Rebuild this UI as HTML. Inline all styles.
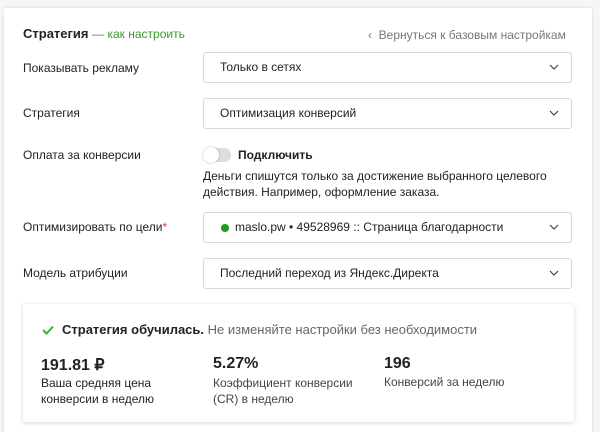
<!DOCTYPE html><html><head><meta charset="utf-8"><style>
html,body{margin:0;width:600px;height:432px;overflow:hidden}
body{background:#f6f6f6;font-family:"Liberation Sans",sans-serif;color:#222;position:relative}
.card{position:absolute;left:4px;top:8px;width:588px;height:430px;background:#fff;box-shadow:0 0 3px rgba(0,0,0,.12)}
.a{position:absolute;white-space:nowrap;font-size:12px}
.sel{position:absolute;left:203px;width:369px;height:31px;border:1px solid #d9d9d9;border-radius:3px;box-sizing:border-box;font-size:12px;line-height:29px;padding-left:16px}
.sel svg{position:absolute;right:12px;top:11px}
.inner{position:absolute;left:23px;top:304px;width:551px;height:118px;background:#fff;box-shadow:0 1px 4px rgba(0,0,0,.18);border-radius:3px}
</style></head><body>
<div class="card"></div>
<div class="a" style="left:23px;top:26px;font-size:13px"><b>Стратегия</b> <span style="color:#3c9a2e;font-size:12px">— как настроить</span></div>
<div class="a" style="left:368px;top:28px;color:#777">‹&nbsp;&nbsp;Вернуться к базовым настройкам</div>
<div class="a" style="left:23px;top:61px">Показывать рекламу</div>
<div class="sel" style="top:52px">Только в сетях<svg width="10" height="6"><path d="M1 1l4 4 4-4" fill="none" stroke="#444" stroke-width="1.2"/></svg></div>
<div class="a" style="left:23px;top:106px">Стратегия</div>
<div class="sel" style="top:98px">Оптимизация конверсий<svg width="10" height="6"><path d="M1 1l4 4 4-4" fill="none" stroke="#444" stroke-width="1.2"/></svg></div>
<div class="a" style="left:23px;top:148px">Оплата за конверсии</div>
<div style="position:absolute;left:203px;top:148px;width:28px;height:14px;border-radius:7px;background:#ddd"></div>
<div style="position:absolute;left:203px;top:147px;width:16px;height:16px;border-radius:8px;background:#fff;box-shadow:0 0 2px rgba(0,0,0,.3)"></div>
<div class="a" style="left:238px;top:148px;font-weight:bold">Подключить</div>
<div class="a" style="left:203px;top:168px;line-height:16px">Деньги спишутся только за достижение выбранного целевого<br>действия. Например, оформление заказа.</div>
<div class="a" style="left:23px;top:220px">Оптимизировать по цели<span style="color:#e33">*</span></div>
<div class="sel" style="top:212px;padding-left:31px"><span style="position:absolute;left:17px;top:11px;width:8px;height:8px;border-radius:4px;background:#1a9c1a"></span>maslo.pw • 49528969 :: Страница благодарности<svg width="10" height="6"><path d="M1 1l4 4 4-4" fill="none" stroke="#444" stroke-width="1.2"/></svg></div>
<div class="a" style="left:23px;top:266px">Модель атрибуции</div>
<div class="sel" style="top:258px">Последний переход из Яндекс.Директа<svg width="10" height="6"><path d="M1 1l4 4 4-4" fill="none" stroke="#444" stroke-width="1.2"/></svg></div>
<div class="inner"></div>
<svg style="position:absolute;left:42px;top:325px" width="12" height="10"><path d="M1 5l3.5 3.5L11 1.5" fill="none" stroke="#3cae3c" stroke-width="2"/></svg>
<div class="a" style="left:62px;top:322px;font-size:13px"><b>Стратегия обучилась.</b> <span style="color:#666">Не изменяйте настройки без необходимости</span></div>
<div class="a" style="left:41px;top:355px;font-size:16px;font-weight:bold;color:#222">191.81 ₽</div>
<div class="a" style="left:41px;top:375px;line-height:16px">Ваша средняя цена<br>конверсии в неделю</div>
<div class="a" style="left:213px;top:355px;font-size:16px;font-weight:bold;color:#222">5.27%</div>
<div class="a" style="left:213px;top:375px;line-height:16px;color:#444">Коэффициент конверсии<br>(CR) в неделю</div>
<div class="a" style="left:384px;top:355px;font-size:16px;font-weight:bold;color:#222">196</div>
<div class="a" style="left:384px;top:375px;color:#444">Конверсий за неделю</div>
</body></html>
